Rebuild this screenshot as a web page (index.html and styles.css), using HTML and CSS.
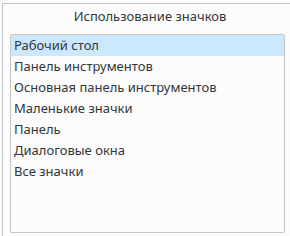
FILE: index.html
```html
<!DOCTYPE html>
<html lang="ru">
<head>
<meta charset="utf-8">
<link rel="stylesheet" href="styles.css">
</head>
<body>
<div class="group">
  <div class="title">Использование значков</div>
  <ul class="list">
    <li class="item selected">Рабочий стол</li>
    <li class="item">Панель инструментов</li>
    <li class="item">Основная панель инструментов</li>
    <li class="item">Маленькие значки</li>
    <li class="item">Панель</li>
    <li class="item">Диалоговые окна</li>
    <li class="item">Все значки</li>
  </ul>
</div>
</body>
</html>
```
FILE: styles.css
```css
html, body {
  margin: 0;
  padding: 0;
  background: #fcfcfc;
  overflow: hidden;
}
body {
  width: 290px;
  height: 236px;
  font-family: "Noto Sans", sans-serif;
  font-size: 13px;
  color: #31363b;
}
.group {
  margin: 3px 0 0 2px;
  border-top: 1px solid #c4c5c6;
  border-left: 1px solid #c4c5c6;
  width: 300px;
  height: 240px;
  box-sizing: border-box;
}
.title {
  width: 290px;
  text-align: center;
  height: 30px;
  line-height: 25px;
  padding-left: 4px;
  box-sizing: border-box;
}
.list {
  list-style: none;
  margin: 0 0 0 7px;
  padding: 0;
  width: 275px;
  height: 199px;
  box-sizing: border-box;
  border: 1px solid #c4c5c6;
  border-radius: 2px;
  background: #fcfcfc;
}
.item {
  height: 21px;
  line-height: 21px;
  padding-left: 3px;
}
.selected {
  background: #cce8ff;
}
```
